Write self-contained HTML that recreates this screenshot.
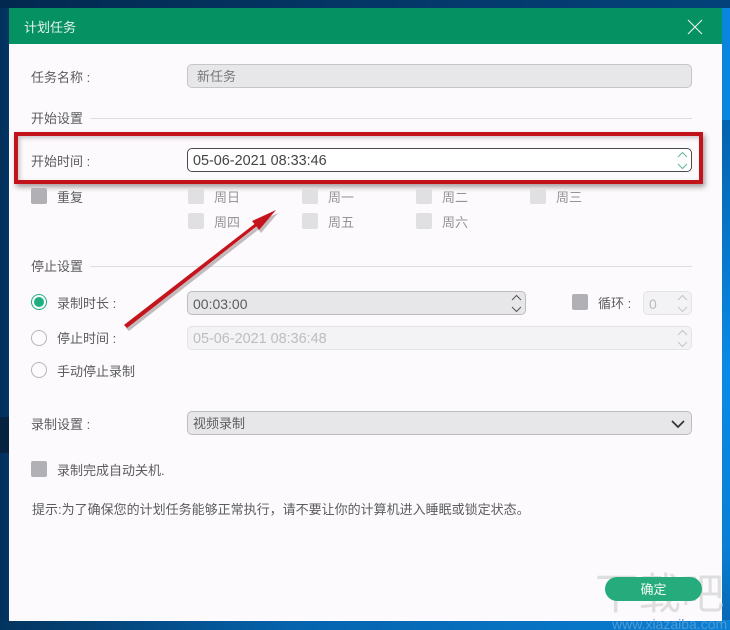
<!DOCTYPE html>
<html lang="zh-CN"><head><meta charset="utf-8"><title>计划任务</title>
<style>
*{box-sizing:border-box}
html,body{margin:0;padding:0;width:730px;height:630px;overflow:hidden}
body{position:relative;font-family:"Liberation Sans","Noto Sans CJK SC",sans-serif;font-size:13px;color:#5c5c5c;background:linear-gradient(90deg,#03305c 0,#02487f 5%,#045a9c 40%,#0570bf 75%,#0a86de 100%)}
.a{position:absolute}
.t{position:absolute;line-height:18px;height:18px;white-space:nowrap;margin-top:1px}
.f{position:absolute;height:24px;border-radius:5px;background:#e7e6e9;border:1px solid #bdbcbf;padding-left:5px;line-height:24px;white-space:nowrap}
.cb{position:absolute;width:16px;height:16px;border-radius:2px;background:#b1b0b4}
.cd{position:absolute;width:16px;height:16px;border-radius:2px;background:#e0dfe2}
.g{color:#949494}
.line{position:absolute;height:1px;background:#dededf}
.r{position:absolute;width:16px;height:16px;border-radius:50%;border:1px solid #b5b5b8;background:#fdfbfe}
svg{position:absolute;overflow:visible}
</style></head><body>
<div class="a" style="left:0;top:0;width:730px;height:8px;background:linear-gradient(90deg,#03284f,#04396b 60%,#03417a)"></div>
<div class="a" style="left:722px;top:120px;width:8px;height:500px;background:linear-gradient(#0563ad,#0a8ae6 50%,#0a7fd4 85%,#0868b4)"></div>
<div class="a" style="left:0;top:417px;width:9px;height:36px;background:#05233f"></div>
<div class="a" style="left:0;top:621px;width:730px;height:9px;background:linear-gradient(90deg,#03345f,#0563ad 40%,#0a7fd4)"></div>

<div class="a" style="left:9px;top:8px;width:713px;height:613px;background:#fcfafd"></div>
<div class="a" style="left:9px;top:8px;width:713px;height:36px;background:#069163"></div>
<div class="t" style="left:24px;top:18px;color:#e4f4ee">计划任务</div>
<svg style="left:687px;top:19px" width="16" height="16"><path d="M1 1L15 15M15 1L1 15" stroke="#e6f6f0" stroke-width="1.1" fill="none"/></svg>

<div class="t" style="left:31px;top:68px">任务名称&nbsp;:</div>
<div class="f" style="left:187px;top:64px;width:505px;color:#777;padding-left:9px;border-color:#c6c6c8">新任务</div>

<div class="t" style="left:31px;top:109px">开始设置</div>
<div class="line" style="left:90px;top:118px;width:602px"></div>

<div class="t" style="left:31px;top:152px">开始时间&nbsp;:</div>
<div class="f" style="left:187px;top:148px;width:505px;background:#fff;border-color:#4a4a4a;color:#444;font-size:14.4px">05-06-2021 08:33:46</div>
<svg style="left:677px;top:151px" width="11" height="19" fill="none" stroke="#62b59a" stroke-width="1"><path d="M1 6L5.500 1.500L10 6M1 13L5.500 17.500L10 13"/></svg>

<div class="a" style="left:14px;top:132px;width:689px;height:52px;border:4px solid #c3131a;box-shadow:2px 3px 5px rgba(60,40,40,.45),inset 2px 2px 4px rgba(90,70,70,.3)"></div>

<div class="cb" style="left:31px;top:188px"></div><div class="t" style="left:57px;top:188px">重复</div>
<div class="cd" style="left:188px;top:188px"></div><div class="t g" style="left:214px;top:188px">周日</div>
<div class="cd" style="left:302px;top:188px"></div><div class="t g" style="left:328px;top:188px">周一</div>
<div class="cd" style="left:416px;top:188px"></div><div class="t g" style="left:442px;top:188px">周二</div>
<div class="cd" style="left:530px;top:188px"></div><div class="t g" style="left:556px;top:188px">周三</div>
<div class="cd" style="left:188px;top:213px"></div><div class="t g" style="left:214px;top:213px">周四</div>
<div class="cd" style="left:302px;top:213px"></div><div class="t g" style="left:328px;top:213px">周五</div>
<div class="cd" style="left:416px;top:213px"></div><div class="t g" style="left:442px;top:213px">周六</div>

<div class="t" style="left:31px;top:257px">停止设置</div>
<div class="line" style="left:90px;top:266px;width:602px"></div>

<div class="r" style="left:31px;top:294px;border-color:#1fae80"></div>
<div class="a" style="left:34px;top:297px;width:10px;height:10px;border-radius:50%;background:#1fae80"></div>
<div class="t" style="left:57px;top:294px">录制时长&nbsp;:</div>
<div class="f" style="left:187px;top:291px;width:339px;font-size:14px">00:03:00</div>
<svg style="left:511px;top:294px" width="11" height="19" fill="none" stroke="#555" stroke-width="1"><path d="M1 6L5.500 1.500L10 6M1 13L5.500 17.500L10 13"/></svg>

<div class="cb" style="left:572px;top:294px"></div>
<div class="t" style="left:598px;top:294px">循环&nbsp;:</div>
<div class="f" style="left:643px;top:291px;width:49px;background:#f3f2f4;border-color:#e3e3e5;color:#bbb;padding-left:5px;font-size:14px">0</div>
<svg style="left:677px;top:294px" width="11" height="19" fill="none" stroke="#c4c4c6" stroke-width="1"><path d="M1 6L5.500 1.500L10 6M1 13L5.500 17.500L10 13"/></svg>

<div class="r" style="left:31px;top:330px"></div>
<div class="t" style="left:57px;top:329px">停止时间&nbsp;:</div>
<div class="f" style="left:187px;top:326px;width:505px;background:#f3f2f4;border-color:#e3e3e5;color:#bdbdbd;font-size:14.4px">05-06-2021 08:36:48</div>
<svg style="left:677px;top:329px" width="11" height="19" fill="none" stroke="#c4c4c6" stroke-width="1"><path d="M1 6L5.500 1.500L10 6M1 13L5.500 17.500L10 13"/></svg>

<div class="r" style="left:31px;top:362px"></div>
<div class="t" style="left:57px;top:362px">手动停止录制</div>

<div class="t" style="left:31px;top:415px">录制设置&nbsp;:</div>
<div class="f" style="left:187px;top:411px;width:505px">视频录制</div>
<svg style="left:671px;top:420px" width="14" height="8" fill="none" stroke="#333" stroke-width="1.700"><path d="M1 1L7 7L13 1"/></svg>

<div class="cb" style="left:31px;top:461px"></div>
<div class="t" style="left:57px;top:461px">录制完成自动关机.</div>
<div class="t" style="left:32px;top:500px">提示:为了确保您的计划任务能够正常执行，请不要让你的计算机进入睡眠或锁定状态。</div>

<svg style="left:0;top:0" width="730" height="630">
<path d="M124 325L254.500 224L252 221L276 210L259 230L256.500 226.500L127 328Z" fill="#6b5a5a" opacity=".4" transform="translate(2 3)"/>
<path d="M124 325L254.500 224L252 221L276 210L259 230L256.500 226.500L127 328Z" fill="#c5141b"/>
</svg>

<div class="t" style="left:595px;top:571px;width:132px;height:46px;line-height:46px;font-size:43px;letter-spacing:0;color:#dedede;overflow:hidden">下载吧</div>
<div class="t" style="left:612px;top:616px;font-size:14px;line-height:14px;height:14px;color:#4f9ad2">www.xiazaiba.com</div>
<div class="a" style="left:605px;top:577px;width:97px;height:24px;border-radius:12px;background:#26ac7c;color:#f2faf6;text-align:center;line-height:25px">确定</div>
</body></html>
